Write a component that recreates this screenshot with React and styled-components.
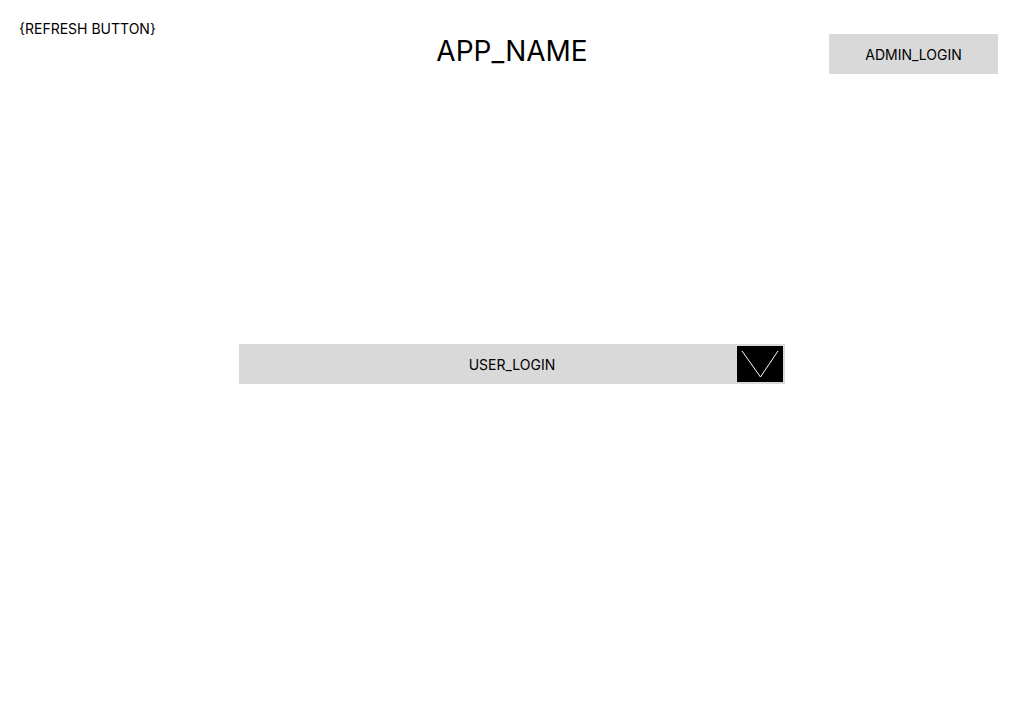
import React from 'react';
import styled, { createGlobalStyle } from 'styled-components';

const GlobalStyle = createGlobalStyle`
  html, body {
    margin: 0;
    padding: 0;
    height: 100%;
    background: #ffffff;
    font-family: 'Inter', 'Noto Sans', sans-serif;
    color: #000;
  }
`;

// whole page: header row on top, login bar centred in the viewport
const Page = styled.div`
  height: 100vh;
  display: grid;
  grid-template-rows: 1fr auto 1fr;
  justify-items: center;
`;

const Header = styled.header`
  align-self: start;
  width: 100%;
  display: grid;
  grid-template-columns: 1fr auto 1fr;
  align-items: start;
`;

const RefreshButton = styled.button`
  justify-self: start;
  margin: 20px 0 0 19px;
  padding: 0;
  border: none;
  background: none;
  font-family: inherit;
  font-size: 14px;
  line-height: 18px;
  color: #000;
  cursor: pointer;
`;

const Title = styled.h1`
  margin: 33px 0 0;
  font-size: 28px;
  font-weight: 400;
  line-height: 36px;
`;

const GreyButton = styled.button`
  display: flex;
  align-items: center;
  justify-content: center;
  height: 40px;
  border: none;
  background: #d9d9d9;
  font-family: inherit;
  font-size: 14px;
  color: #000;
  cursor: pointer;
`;

const AdminButton = styled(GreyButton)`
  justify-self: end;
  width: 169px;
  margin: 34px 26px 0 0;
`;

const UserBar = styled(GreyButton)`
  position: relative;
  width: 546px;
  padding: 0;
`;

const Toggle = styled.span`
  position: absolute;
  right: 2px;
  top: 2px;
  bottom: 2px;
  width: 46px;
  background: #000;
  display: flex;
  align-items: center;
  justify-content: center;
`;

const Chevron = () => (
  <svg width="46" height="36" viewBox="0 0 46 36">
    <polyline points="5,5 23.5,31 41,5" fill="none" stroke="#fff" strokeWidth="1" />
  </svg>
);

const App = () => (
  <>
    <GlobalStyle />
    <Page>
      <Header>
        <RefreshButton>{'{REFRESH BUTTON}'}</RefreshButton>
        <Title>APP_NAME</Title>
        <AdminButton>ADMIN_LOGIN</AdminButton>
      </Header>
      <UserBar>
        USER_LOGIN
        <Toggle>
          <Chevron />
        </Toggle>
      </UserBar>
      <div />
    </Page>
  </>
);

export default App;
